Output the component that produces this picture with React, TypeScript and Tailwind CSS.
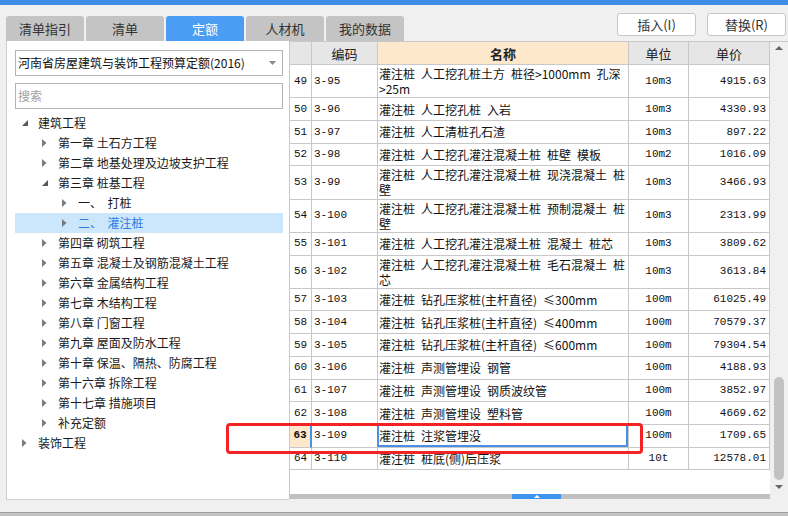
import React from 'react';

type TreeNode = {
  level: 0 | 1 | 2;
  label: string;
  open?: boolean;
  selected?: boolean;
};

const tree: TreeNode[] = [
  { level: 0, label: '建筑工程', open: true },
  { level: 1, label: '第一章 土石方工程' },
  { level: 1, label: '第二章 地基处理及边坡支护工程' },
  { level: 1, label: '第三章 桩基工程', open: true },
  { level: 2, label: '一、  打桩' },
  { level: 2, label: '二、  灌注桩', selected: true },
  { level: 1, label: '第四章 砌筑工程' },
  { level: 1, label: '第五章 混凝土及钢筋混凝土工程' },
  { level: 1, label: '第六章 金属结构工程' },
  { level: 1, label: '第七章 木结构工程' },
  { level: 1, label: '第八章 门窗工程' },
  { level: 1, label: '第九章 屋面及防水工程' },
  { level: 1, label: '第十章 保温、隔热、防腐工程' },
  { level: 1, label: '第十六章 拆除工程' },
  { level: 1, label: '第十七章 措施项目' },
  { level: 1, label: '补充定额' },
  { level: 0, label: '装饰工程' },
];

const indent: Record<number, string> = {
  0: 'pl-[7px]',
  1: 'pl-[27px]',
  2: 'pl-[47px]',
};

type Row = {
  no: number;
  code: string;
  name: string[];
  unit: string;
  price: string;
};

const rows: Row[] = [
  { no: 49, code: '3-95', name: ['灌注桩 人工挖孔桩土方 桩径>1000mm 孔深', '>25m'], unit: '10m3', price: '4915.63' },
  { no: 50, code: '3-96', name: ['灌注桩 人工挖孔桩 入岩'], unit: '10m3', price: '4330.93' },
  { no: 51, code: '3-97', name: ['灌注桩 人工清桩孔石渣'], unit: '10m3', price: '897.22' },
  { no: 52, code: '3-98', name: ['灌注桩 人工挖孔灌注混凝土桩 桩壁 模板'], unit: '10m2', price: '1016.09' },
  { no: 53, code: '3-99', name: ['灌注桩 人工挖孔灌注混凝土桩 现浇混凝土 桩', '壁'], unit: '10m3', price: '3466.93' },
  { no: 54, code: '3-100', name: ['灌注桩 人工挖孔灌注混凝土桩 预制混凝土 桩', '壁'], unit: '10m3', price: '2313.99' },
  { no: 55, code: '3-101', name: ['灌注桩 人工挖孔灌注混凝土桩 混凝土 桩芯'], unit: '10m3', price: '3809.62' },
  { no: 56, code: '3-102', name: ['灌注桩 人工挖孔灌注混凝土桩 毛石混凝土 桩', '芯'], unit: '10m3', price: '3613.84' },
  { no: 57, code: '3-103', name: ['灌注桩 钻孔压浆桩(主杆直径) ≤300mm'], unit: '100m', price: '61025.49' },
  { no: 58, code: '3-104', name: ['灌注桩 钻孔压浆桩(主杆直径) ≤400mm'], unit: '100m', price: '70579.37' },
  { no: 59, code: '3-105', name: ['灌注桩 钻孔压浆桩(主杆直径) ≤600mm'], unit: '100m', price: '79304.54' },
  { no: 60, code: '3-106', name: ['灌注桩 声测管埋设 钢管'], unit: '100m', price: '4188.93' },
  { no: 61, code: '3-107', name: ['灌注桩 声测管埋设 钢质波纹管'], unit: '100m', price: '3852.97' },
  { no: 62, code: '3-108', name: ['灌注桩 声测管埋设 塑料管'], unit: '100m', price: '4669.62' },
  { no: 63, code: '3-109', name: ['灌注桩 注浆管埋没'], unit: '100m', price: '1709.65' },
  { no: 64, code: '3-110', name: ['灌注桩 桩底(侧)后压浆'], unit: '10t', price: '12578.01' },
];

const tabs = ['清单指引', '清单', '定额', '人材机', '我的数据'];

const cell = 'border-r border-b border-[#c8c8c8]';
const mono = "font-['Liberation_Mono',monospace] text-[11px]";

// 원본의 반각 공백 폭(6px)에 맞춤
const wide = (s: string) => s.replace(/ /g, '\u2002');

function Arrow({ open }: { open?: boolean }) {
  return open ? (
    <svg width="6" height="6" viewBox="0 0 6 6">
      <polygon points="6,0 6,6 0,6" fill="#595959" />
    </svg>
  ) : (
    <svg width="5" height="8" viewBox="0 0 5 8">
      <polygon points="0,0 4.5,4 0,8" fill="#7a7a7a" />
    </svg>
  );
}

export default function App() {
  return (
    <div className="relative flex h-[516px] w-[788px] flex-col overflow-hidden bg-[#f0f0f0] font-['Noto_Sans_CJK_SC',sans-serif] text-[#222]">
      <div className="h-[5px] bg-[#3c8ee6]" />

      {/* 탭 + 버튼 */}
      <div className="flex h-[36px] items-start justify-between pl-[6px] pr-[2px]">
        <div className="mt-[11px] flex gap-[2px]">
          {tabs.map((t) => (
            <div
              key={t}
              className={[
                'flex h-[25px] w-[78px] items-center justify-center rounded-t-[3px] text-[13px] leading-none',
                t === '定额' ? 'bg-[#4b9df3] text-white' : 'bg-[#c4c4c4] text-[#333]',
              ].join(' ')}
            >
              {t}
            </div>
          ))}
        </div>
        <div className="mt-[8px] flex gap-[11px]">
          {['插入(I)', '替换(R)'].map((b) => (
            <button
              key={b}
              type="button"
              className="flex h-[23px] w-[79px] items-center justify-center rounded-[3px] border border-[#c6c6c6] bg-white text-[13px] leading-none text-[#333]"
            >
              {b}
            </button>
          ))}
        </div>
      </div>

      <div className="flex h-[459px] pl-[6px]">
        {/* 좌측 트리 */}
        <div className="flex w-[283px] flex-col border-b border-l border-[#d0d0d0] bg-white pl-[8px] pr-[6px] pt-[9px]">
          <div className="flex h-[26px] items-center justify-between border border-[#b4b4b4] pl-[2px] pr-[6px] text-[12px] leading-none text-[#111]">
            <span>河南省房屋建筑与装饰工程预算定额(2016)</span>
            <svg width="7" height="4" viewBox="0 0 7 4">
              <polygon points="0,0 7,0 3.5,4" fill="#8a8a8a" />
            </svg>
          </div>
          <div className="mt-[7px] flex h-[26px] items-center border border-[#b4b4b4] pl-[2px] text-[12px] leading-none text-[#a0a0a0]">
            搜索
          </div>
          <div className="mt-[4px] flex flex-col">
            {tree.map((n) => (
              <div
                key={n.label}
                className={[
                  'flex h-[20px] items-center text-[12px] leading-none',
                  indent[n.level],
                  n.selected ? 'bg-[#cce6fc] text-[#2f7ae0]' : 'text-[#1a1a1a]',
                ].join(' ')}
              >
                <span className="flex w-[16px] items-center">
                  <Arrow open={n.open} />
                </span>
                <span className="whitespace-pre">{n.label}</span>
              </div>
            ))}
          </div>
        </div>

        {/* 우측 그리드 */}
        <div className="flex h-[458px] w-[499px] flex-col border-l border-t border-[#c8c8c8] bg-white">
          <div className="flex h-[452px]">
            <div className="flex w-[480px] flex-col">
              <div className="flex h-[23px] text-[13px] leading-none">
                <div className={`${cell} w-[22px] bg-[#e6e6e6]`} />
                <div className={`${cell} flex w-[66px] items-center justify-center bg-[#e6e6e6]`}>编码</div>
                <div className={`${cell} flex w-[251px] items-center justify-center bg-[#fde8cb] font-bold`}>名称</div>
                <div className={`${cell} flex w-[60px] items-center justify-center bg-[#e6e6e6]`}>单位</div>
                <div className={`${cell} flex w-[81px] items-center justify-center bg-[#e6e6e6]`}>单价</div>
              </div>
              {rows.map((r) => {
                const sel = r.no === 63;
                const tall = r.name.length > 1;
                return (
                  <div key={r.no} className={`flex text-[#111] ${tall ? 'h-[33.25px]' : 'h-[22.7px]'}`}>
                    <div
                      className={[
                        cell,
                        mono,
                        'flex w-[22px] items-center justify-center',
                        sel ? 'border-r-2 border-r-[#4a8fe6] bg-[#fde8cb] font-bold' : '',
                      ].join(' ')}
                    >
                      {r.no}
                    </div>
                    <div className={`${cell} ${mono} flex w-[66px] items-center pl-[2px]`}>{r.code}</div>
                    <div className={`${cell} relative flex w-[251px] flex-col justify-center pl-[1px] text-[12px] leading-[15px]`}>
                      {r.name.map((l) => (
                        <span key={l} className="whitespace-nowrap">
                          {wide(l)}
                        </span>
                      ))}
                      {sel ? (
                        <div className="absolute bottom-0 left-[-1px] right-0 top-[-1px] border-2 border-[#4a8fe6]" />
                      ) : null}
                    </div>
                    <div className={`${cell} ${mono} flex w-[60px] items-center justify-center`}>{r.unit}</div>
                    <div className={`${cell} ${mono} flex w-[81px] items-center justify-end pr-[3px]`}>{r.price}</div>
                  </div>
                );
              })}
            </div>

            {/* 세로 스크롤바 */}
            <div className="flex w-[18px] flex-col items-center bg-[#f0f0f0]">
              <div className="flex h-[12px] items-center">
                <svg width="8" height="4" viewBox="0 0 8 4">
                  <polygon points="0,4 8,4 4,0" fill="#666" />
                </svg>
              </div>
              <div className="mt-auto h-[103px] w-[10px] rounded-full bg-[#c2c2c2]" />
              <div className="flex h-[14px] items-center">
                <svg width="8" height="4" viewBox="0 0 8 4">
                  <polygon points="0,0 8,0 4,4" fill="#666" />
                </svg>
              </div>
            </div>
          </div>

          {/* 가로 스크롤바 */}
          <div className="flex h-[5px]">
            <div className="flex w-[480px] bg-[#c0c0c0] pl-[222px]">
              <div className="flex h-[5px] w-[49px] items-center justify-center bg-[#3e95ef]">
                <svg width="6" height="3" viewBox="0 0 6 3">
                  <polygon points="0,3 6,3 3,0" fill="#fff" />
                </svg>
              </div>
            </div>
            <div className="w-[18px] bg-[#f0f0f0]" />
          </div>
        </div>
      </div>

      <div className="flex-1" />
      <div className="h-[4px] border-t border-[#a0a0a0] bg-[#c4c4c4]" />

      {/* 빨간 표시 */}
      <div className="absolute left-[226px] top-[423px] h-[31px] w-[417px] rounded-[4px] border-[3px] border-[#f42323]" />
    </div>
  );
}
